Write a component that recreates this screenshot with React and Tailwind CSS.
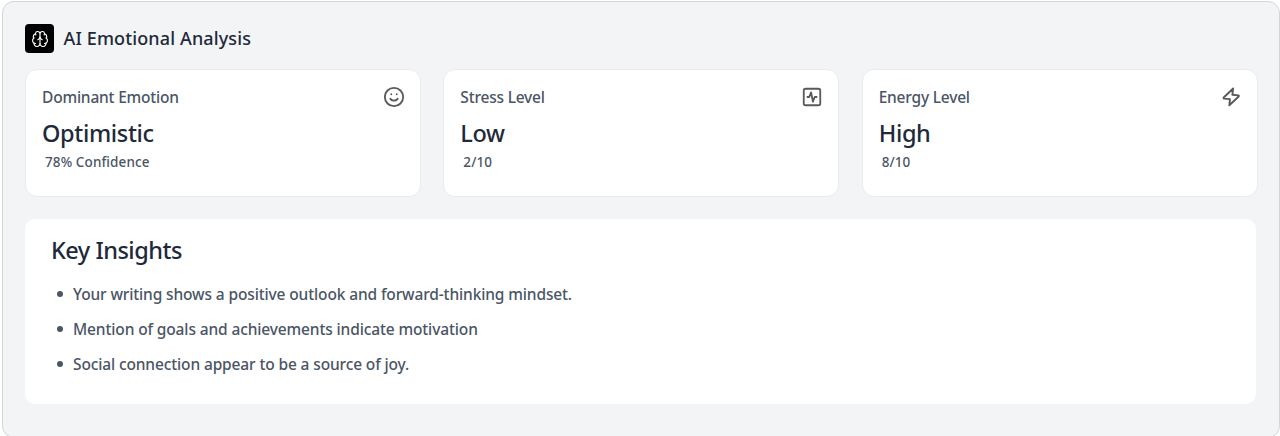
import React from "react";
import { Brain, Smile, SquareActivity } from "lucide-react";

function Bolt({ className }) {
  return (
    <svg viewBox="0 0 22 22" fill="none" stroke="currentColor" strokeWidth="1.9" strokeLinejoin="round" className={className}>
      <path d="M13.1 2.5 3.7 11.5c-.4.5-.2 1 .4 1.1l5.9.5-.7 6.2 9.4-8.8c.4-.5.2-1-.4-1.1l-5.9-.6Z" />
    </svg>
  );
}

const stats = [
  { title: "Dominant Emotion", value: "Optimistic", note: "78% Confidence", Icon: Smile },
  { title: "Stress Level", value: "Low", note: "2/10", Icon: SquareActivity },
  { title: "Energy Level", value: "High", note: "8/10", Icon: Bolt },
];

const insights = [
  "Your writing shows a positive outlook and forward-thinking mindset.",
  "Mention of goals and achievements indicate motivation",
  "Social connection appear to be a source of joy.",
];

function StatCard({ title, value, note, Icon }) {
  return (
    <div className="h-32 rounded-xl border border-[#e9ebee] bg-white pt-[15px] pr-[15px] pl-4">
      <div className="flex h-6 items-center justify-between">
        <span className="pt-0.5 text-[15.5px] font-medium tracking-[-0.2px] text-gray-600">{title}</span>
        <Icon className="size-[22px] text-[#5a5a5a]" strokeWidth={2} />
      </div>
      <div className="mt-2 text-[23.5px] leading-8 font-medium tracking-[-0.35px] text-gray-800">{value}</div>
      <div className="pt-[3px] pl-[3px] text-[13.5px] leading-5 font-medium tracking-[0.1px] text-gray-600">{note}</div>
    </div>
  );
}

export default function App() {
  return (
    <main className="h-[436px] overflow-hidden bg-white pt-px pl-0.5 font-['Noto_Sans',sans-serif]">
      <section className="h-[437px] rounded-xl border border-gray-300 bg-gray-100 pt-[22px] pr-[23px] pl-[22px]">
        <header className="flex h-[29px] items-center gap-[9.5px]">
          <div className="flex size-[29px] items-center justify-center rounded bg-black text-white">
            <Brain className="size-[18px]" strokeWidth={1.5} />
          </div>
          <h1 className="-mt-0.5 text-lg font-medium tracking-[0.13px] text-gray-800">AI Emotional Analysis</h1>
        </header>
        <div className="mt-4 -mr-[1.5px] grid grid-cols-3 gap-[22.5px]">
          {stats.map((s) => (
            <StatCard key={s.title} {...s} />
          ))}
        </div>
        <div className="mt-[22px] h-[185px] rounded-[10px] bg-white px-[26px] pt-[15px]">
          <h2 className="text-[23.5px] leading-8 font-medium tracking-[-0.5px] text-gray-800">Key Insights</h2>
          <ul className="mt-4 flex flex-col gap-[11px] pl-[6px]">
            {insights.map((t) => (
              <li key={t} className="flex h-6 items-center gap-[10px] text-[15.5px] font-medium tracking-[-0.13px] whitespace-nowrap text-gray-600">
                <span className="size-1.5 rounded-full bg-gray-600" />
                <span className="pt-0.5">{t}</span>
              </li>
            ))}
          </ul>
        </div>
      </section>
    </main>
  );
}
